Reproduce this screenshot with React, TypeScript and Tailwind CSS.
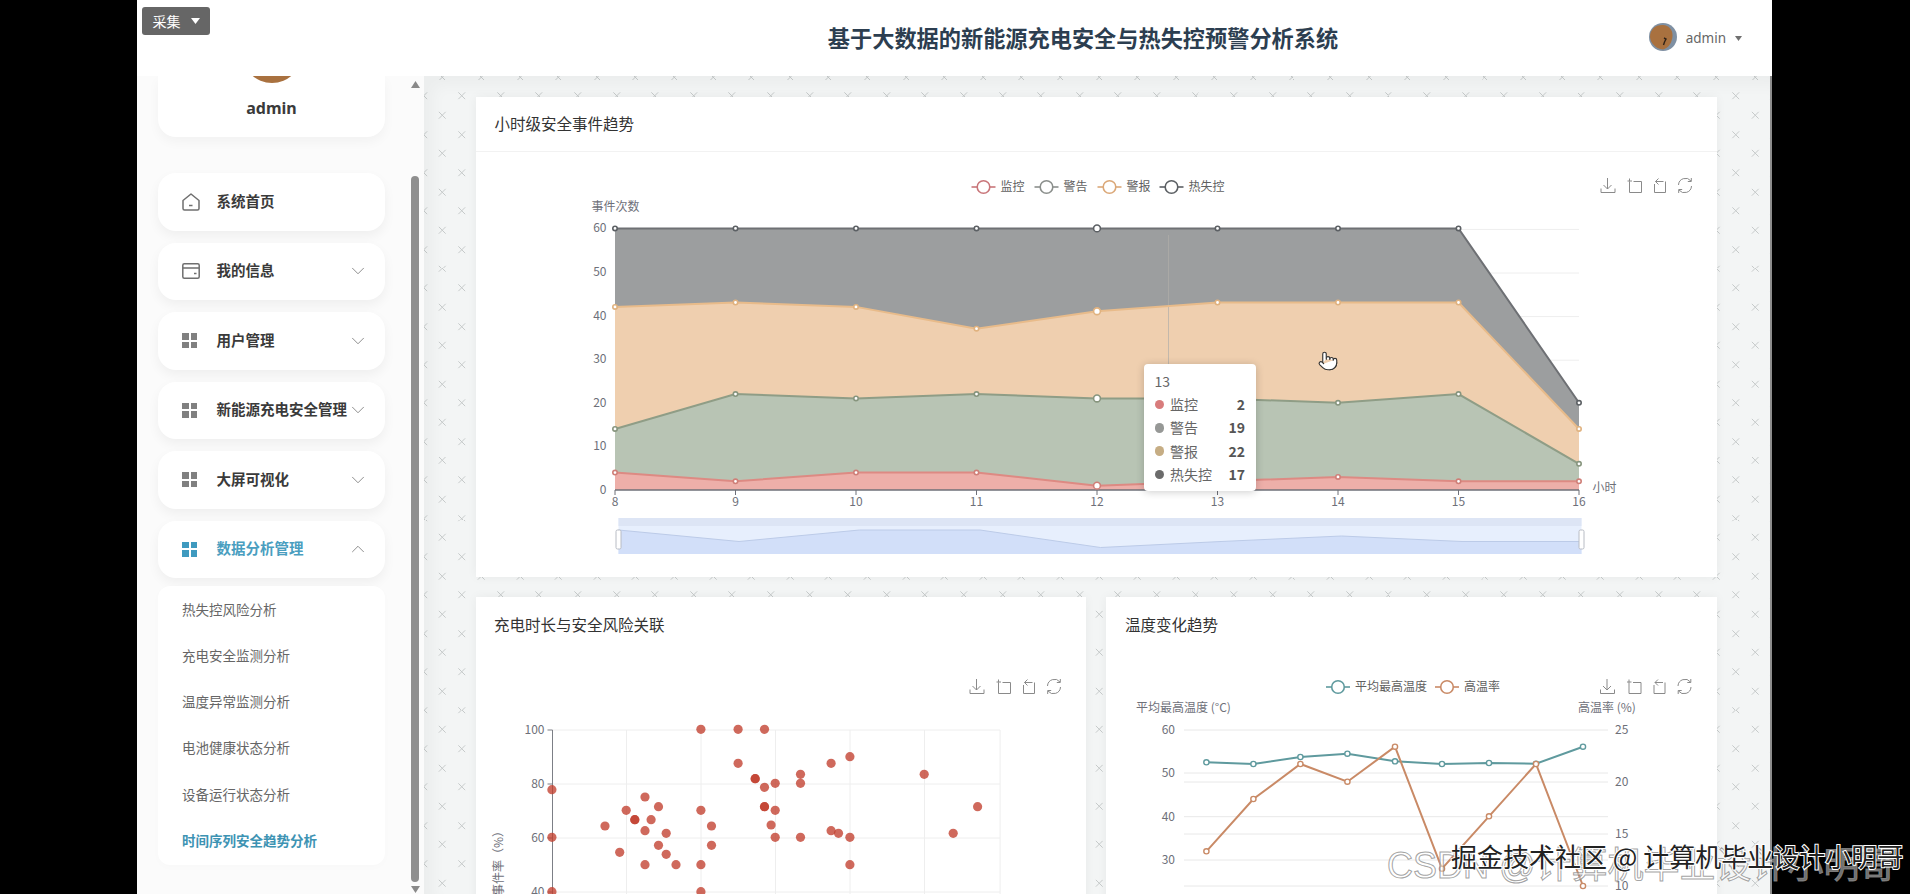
import { ChevronDown, ChevronUp, Pointer } from 'lucide-react';

const NAV = [
  { label: '系统首页', icon: 'home' },
  { label: '我的信息', icon: 'wallet', chevron: true },
  { label: '用户管理', icon: 'grid', chevron: true },
  { label: '新能源充电安全管理', icon: 'grid', chevron: true },
  { label: '大屏可视化', icon: 'grid', chevron: true },
];

const SUB_ITEMS = ['热失控风险分析', '充电安全监测分析', '温度异常监测分析', '电池健康状态分析', '设备运行状态分析'];

const TOOLTIP_ROWS = [
  { name: '监控', value: 2, dot: 'bg-[#d87c7c]' },
  { name: '警告', value: 19, dot: 'bg-[#969896]' },
  { name: '警报', value: 22, dot: 'bg-[#c6ad84]' },
  { name: '热失控', value: 17, dot: 'bg-[#6b6b6b]' },
];

// stacked totals per hour, bottom to top
const STACK = {
  red: [4, 2, 4, 4, 1, 2, 3, 2, 2],
  green: [14, 22, 21, 22, 21, 21, 20, 22, 6],
  orange: [42, 43, 42, 37, 41, 43, 43, 43, 14],
  gray: [60, 60, 60, 60, 60, 60, 60, 60, 20],
};

const hx = (i: number) => 614.5 + i * 120.5;
const vy = (v: number) => 490 - v * 4.36;

const linePts = (vals: number[]) => vals.map((v, i) => `${hx(i)},${vy(v)}`).join(' ');
const areaPts = (top: number[], bottom?: number[]) => {
  const low = bottom ?? top.map(() => 0);
  const back = low.map((v, i) => `${hx(i)},${vy(v)}`).reverse().join(' ');
  return `${linePts(top)} ${back}`;
};

// scatter points measured off the plot
const SCATTER: [number, number][] = [
  [700.4, 729.3], [737.6, 729.3], [764, 729.3], [737.6, 763.3], [849.4, 756.7], [830.6, 763.3],
  [754.7, 778.7], [754.7, 778.7], [800, 774.3], [923.7, 774.3], [764, 787.3], [774.7, 783.3],
  [800, 783.3], [551.4, 789.7], [644.5, 797], [658, 806.7], [625.7, 810.3], [700.4, 810.3],
  [764, 806.7], [764, 806.7], [774.7, 810.3], [977.1, 806.7], [634.3, 819.7], [634.3, 819.7],
  [650.6, 819.7], [604.5, 826], [711, 826], [770.6, 825], [644.5, 830.7], [665.7, 833.3],
  [830.6, 830.7], [838, 833.3], [952.7, 833.3], [551.4, 837.3], [774.7, 837.3], [800, 837.3],
  [849.4, 837.3], [658, 845.3], [711, 845.3], [619.2, 852.3], [665.7, 854.3], [644.5, 864.7],
  [675.5, 864.7], [700.4, 864.7], [849.4, 864.7], [551.4, 891.7], [700.4, 891.7],
];

const TEMP_X = [1206.4, 1253.4, 1300.4, 1347.4, 1395, 1442, 1489, 1536, 1583];
const TEMP_HIGH = [762.3, 764, 757, 753.7, 761.3, 764, 763, 763.7, 746.7];
const TEMP_RATE = [851.3, 799, 764, 781.7, 746.7, 868.7, 816.3, 764, 886];

const pts = (xs: number[], ys: number[]) => xs.map((x, i) => `${x},${ys[i]}`).join(' ');

function GridIcon({ active }: { active?: boolean }) {
  const cell = active ? 'bg-[#3f9abf]' : 'bg-[#808080]';
  return (
    <div className="grid w-[15px] h-[15px] grid-cols-2 gap-[2px] shrink-0">
      <span className={cell} />
      <span className={cell} />
      <span className={cell} />
      <span className={cell} />
    </div>
  );
}

function HomeIcon() {
  return (
    <svg width="18" height="18" viewBox="0 0 18 18" fill="none" stroke="#6f6f6f" strokeWidth="1.5" className="shrink-0">
      <path d="M1 7.5 9 1l8 6.5V15.5a1.5 1.5 0 0 1-1.5 1.5h-13A1.5 1.5 0 0 1 1 15.5z" strokeLinejoin="round" />
      <path d="M7 12.5h3.5" />
    </svg>
  );
}

function WalletIcon() {
  return (
    <svg width="18" height="16" viewBox="0 0 18 16" fill="none" stroke="#6f6f6f" strokeWidth="1.5" className="shrink-0">
      <rect x="0.8" y="0.8" width="16.4" height="14.4" rx="1.5" />
      <path d="M1 5h16M12 10.5h2.5" />
    </svg>
  );
}

function NavCard({ label, icon, chevron }: { label: string; icon: string; chevron?: boolean }) {
  return (
    <div className="flex h-[57.5px] items-center rounded-[18px] bg-white pl-[24px] pr-[16px] shadow-[0_5px_12px_rgba(0,0,0,0.05)]">
      <div className="flex w-[34.5px] shrink-0 items-center">
        {icon === 'home' && <HomeIcon />}
        {icon === 'wallet' && <WalletIcon />}
        {icon === 'grid' && <GridIcon />}
      </div>
      <span className="flex-1 whitespace-nowrap pb-[2px] text-[14.5px] font-bold text-[#3a3a3a]">{label}</span>
      {chevron && <ChevronDown size={22} strokeWidth={0.8} className="shrink-0 text-[#666]" />}
    </div>
  );
}

function Sidebar() {
  return (
    <aside className="flex w-[287px] shrink-0 overflow-hidden bg-[#fbfbfb]">
      <div className="ml-[21px] flex w-[227px] shrink-0 flex-col">
        <div className="flex h-[61px] shrink-0 flex-col items-center overflow-hidden rounded-b-[18px] bg-white shadow-[0_5px_12px_rgba(0,0,0,0.04)]">
          <div className="mt-[-53px] h-[60px] w-[60px] shrink-0 rounded-full bg-[#a9713f]" />
          <span className="mt-[13px] text-[16px] font-bold leading-[24px] text-[#3a3a3a] [font-family:'Noto_Sans',sans-serif]">admin</span>
        </div>
        <div className="mt-[36px] flex flex-col gap-[12px]">
          {NAV.map((item) => (
            <NavCard key={item.label} {...item} />
          ))}
          <div className="flex h-[57.5px] items-center rounded-[18px] bg-white pl-[24px] pr-[16px] shadow-[0_5px_12px_rgba(0,0,0,0.05)]">
            <div className="w-[34.5px] shrink-0">
              <GridIcon active />
            </div>
            <span className="flex-1 pb-[2px] text-[14.5px] font-bold text-[#4a9ec0]">数据分析管理</span>
            <ChevronUp size={22} strokeWidth={0.8} className="text-[#666]" />
          </div>
        </div>
        <div className="mt-[8px] flex flex-col rounded-[12px] bg-white pt-px shadow-[0_2px_8px_rgba(0,0,0,0.015)]">
          {SUB_ITEMS.map((item) => (
            <div key={item} className="flex h-[46.3px] items-center pb-[3px] pl-[24px] text-[13.5px] text-[#666]">
              {item}
            </div>
          ))}
          <div className="flex h-[46.3px] items-center pb-[3px] pl-[24px] text-[13.5px] font-bold text-[#3d93b3]">
            时间序列安全趋势分析
          </div>
        </div>
      </div>
      <div className="ml-[26px] flex w-[8px] shrink-0 flex-col items-center">
        <svg width="9" height="7" viewBox="0 0 9 7" className="mt-[5px] shrink-0">
          <path d="M4.5 0 9 7H0z" fill="#8a8a8a" />
        </svg>
        <div className="mt-[88px] h-[706px] w-[8px] shrink-0 rounded-full bg-[#8f8f8f]" />
        <svg width="9" height="7" viewBox="0 0 9 7" className="mt-[4px] shrink-0">
          <path d="M0 0h9L4.5 7z" fill="#8a8a8a" />
        </svg>
      </div>
    </aside>
  );
}

function Toolbox({ x, y }: { x: number; y: number }) {
  return (
    <g transform={`translate(${x} ${y})`} fill="none" stroke="#8a8a8a" strokeWidth="1">
      <path d="M7 0v11M3 7l4 4 4-4M0.5 10.5v4h14v-4" />
      <path d="M27 3h4.5M29 0.5v3M29 3.5v11h12v-11h-8" />
      <path d="M63 3.5h-8M58 0.5l-3 3 3 3M54 6v8.500h11v-11" />
      <path d="M78 7a7 7 0 0 1 12.500-4M91 8a7 7 0 0 1-12.500 4M90.800 0v3.500h-3.500M78.200 15v-3.500h3.500" />
    </g>
  );
}

function LegendItem({ x, y, color, label }: { x: number; y: number; color: string; label: string }) {
  return (
    <g>
      <line x1={x} x2={x + 24} y1={y} y2={y} stroke={color} strokeWidth="1.6" />
      <circle cx={x + 12} cy={y} r="6.3" fill="#fff" stroke={color} strokeWidth="1.6" />
      <text x={x + 29} y={y + 4} fontSize="12" fill="#5f5f5f">
        {label}
      </text>
    </g>
  );
}

function Series({ vals, line, dot }: { vals: number[]; line: string; dot: string }) {
  return (
    <g>
      <polyline points={linePts(vals)} fill="none" stroke={line} strokeWidth="2" />
      {vals.map((v, i) => (
        <circle key={i} cx={hx(i)} cy={vy(v)} r={i === 4 ? 3.4 : 2.2} fill="#fff" stroke={dot} strokeWidth="1.6" />
      ))}
    </g>
  );
}

function HourlyChart() {
  return (
    <svg viewBox="475.5 152 1241.5 425" width="1241.5" height="425" className="block">
      <text x="591" y="211" fontSize="12" fill="#6e7079">事件次数</text>
      <LegendItem x={971} y={187} color="#c9767a" label="监控" />
      <LegendItem x={1034} y={187} color="#8b8f8c" label="警告" />
      <LegendItem x={1097} y={187} color="#dba878" label="警报" />
      <LegendItem x={1159} y={187} color="#5c6064" label="热失控" />
      <Toolbox x={1600} y={178} />

      {[60, 50, 40, 30, 20, 10].map((v) => (
        <line key={v} x1="614.5" x2="1578.5" y1={vy(v) + 1} y2={vy(v) + 1} stroke="#eeeeee" />
      ))}
      {[60, 50, 40, 30, 20, 10, 0].map((v) => (
        <text key={v} x="606" y={vy(v) + 4} fontSize="12" textAnchor="end" fill="#6e7079">{v}</text>
      ))}

      <polygon points={areaPts(STACK.gray, STACK.orange)} fill="#9c9e9f" />
      <polygon points={areaPts(STACK.orange, STACK.green)} fill="#efcfaf" />
      <polygon points={areaPts(STACK.green, STACK.red)} fill="#b8c4b4" />
      <polygon points={areaPts(STACK.red)} fill="#edafa9" />

      <line x1="1168" x2="1168" y1="235" y2="364" stroke="#b0aeaa" strokeOpacity="0.7" />
      <line x1="614.5" x2="1578.5" y1="490" y2="490" stroke="#6e7079" strokeWidth="1.5" />
      {[0, 1, 2, 3, 4, 5, 6, 7, 8].map((i) => (
        <g key={i}>
          <line x1={hx(i)} x2={hx(i)} y1="490" y2="495" stroke="#6e7079" />
          <text x={hx(i)} y="506" fontSize="12" textAnchor="middle" fill="#6e7079">{8 + i}</text>
        </g>
      ))}
      <text x="1592" y="492" fontSize="12" fill="#6e7079">小时</text>

      <Series vals={STACK.red} line="#dd8a83" dot="#cf7f78" />
      <Series vals={STACK.green} line="#8f9d86" dot="#87957e" />
      <Series vals={STACK.orange} line="#e8bb8a" dot="#e0b27f" />
      <Series vals={STACK.gray} line="#6e7074" dot="#5c6064" />

      <rect x="618" y="518" width="963" height="36" fill="#e7effd" />
      <rect x="618" y="518" width="963" height="8" fill="#dde5f5" />
      <polygon
        points="618,530 738.500,541.500 859,530 979.500,530 1100,547.500 1220.500,541.500 1341,536 1461.500,541.500 1581,541.500 1581,554 618,554"
        fill="#d2dff9"
      />
      <polyline
        points="618,530 738.500,541.500 859,530 979.500,530 1100,547.500 1220.500,541.500 1341,536 1461.500,541.500 1581,541.500"
        fill="none"
        stroke="#bccbe8"
      />
      <rect x="615.500" y="530" width="5" height="19" rx="1.5" fill="#fff" stroke="#b8bcc4" />
      <rect x="1578.500" y="530" width="5" height="19" rx="1.5" fill="#fff" stroke="#b8bcc4" />

      <Pointer x={1317} y={350} width={21} height={22} fill="#fff" stroke="#333" strokeWidth={1.3} />
    </svg>
  );
}

function ScatterChart() {
  return (
    <svg viewBox="475.5 652 610.5 345" width="610.5" height="345" className="block">
      <Toolbox x={969} y={679} />
      {[730, 784, 838, 892].map((y) => (
        <line key={y} x1="552" x2="999.6" y1={y} y2={y} stroke="#eeeeee" />
      ))}
      {[626, 700.5, 775, 849.5, 924, 999.6].map((x) => (
        <line key={x} x1={x} x2={x} y1="730" y2="900" stroke="#eeeeee" />
      ))}
      <line x1="552" x2="552" y1="730" y2="900" stroke="#7c7f86" />
      {[
        { y: 730, t: 100 },
        { y: 784, t: 80 },
        { y: 838, t: 60 },
        { y: 892, t: 40 },
      ].map((r) => (
        <g key={r.t}>
          <line x1="547" x2="552" y1={r.y} y2={r.y} stroke="#7c7f86" />
          <text x="544" y={r.y + 4} fontSize="12" textAnchor="end" fill="#6e7079">{r.t}</text>
        </g>
      ))}
      <text x="0" y="0" fontSize="12" textAnchor="end" fill="#6e7079" transform="translate(502 825) rotate(-90)">
        安全事件率（%）
      </text>
      {SCATTER.map(([x, y], i) => (
        <circle key={i} cx={x} cy={y} r="4.6" fill="#c23f2e" fillOpacity="0.78" />
      ))}
    </svg>
  );
}

function TempChart() {
  return (
    <svg viewBox="1106 652 611 345" width="611" height="345" className="block">
      <LegendItem x={1326} y={687} color="#5f9a9e" label="平均最高温度" />
      <LegendItem x={1435} y={687} color="#c98a66" label="高温率" />
      <Toolbox x={1600} y={679} />
      <text x="1136" y="712" fontSize="12" fill="#6e7079">平均最高温度 (°C)</text>
      <text x="1578" y="712" fontSize="12" fill="#6e7079">高温率 (%)</text>
      {[730, 773, 782, 816.7, 834, 860, 886].map((y) => (
        <line key={y} x1="1184" x2="1608" y1={y} y2={y} stroke="#e8e8e8" />
      ))}
      {[
        { y: 730, t: 60 },
        { y: 773, t: 50 },
        { y: 816.7, t: 40 },
        { y: 860, t: 30 },
      ].map((r) => (
        <text key={r.t} x="1175" y={r.y + 4} fontSize="12" textAnchor="end" fill="#6e7079">{r.t}</text>
      ))}
      {[
        { y: 730, t: 25 },
        { y: 782, t: 20 },
        { y: 834, t: 15 },
        { y: 886, t: 10 },
      ].map((r) => (
        <text key={r.t} x="1615" y={r.y + 4} fontSize="12" fill="#6e7079">{r.t}</text>
      ))}
      <polyline points={pts(TEMP_X, TEMP_HIGH)} fill="none" stroke="#5f9a9e" strokeWidth="2" />
      <polyline points={pts(TEMP_X, TEMP_RATE)} fill="none" stroke="#c98a66" strokeWidth="2" />
      {TEMP_X.map((x, i) => (
        <g key={x}>
          <circle cx={x} cy={TEMP_HIGH[i]} r="2.6" fill="#fff" stroke="#5f9a9e" strokeWidth="1.4" />
          <circle cx={x} cy={TEMP_RATE[i]} r="2.6" fill="#fff" stroke="#c98a66" strokeWidth="1.4" />
        </g>
      ))}
    </svg>
  );
}

function ChartTooltip() {
  return (
    <div className="absolute left-[668px] top-[267px] h-[127px] w-[112.5px] rounded-[4px] bg-white pl-[11px] pr-[11px] pt-[6px] text-[14px] shadow-[0_1px_8px_rgba(0,0,0,0.2)]">
      <div className="h-[23px] leading-[23px] text-[#666]">13</div>
      {TOOLTIP_ROWS.map((row) => (
        <div key={row.name} className="flex h-[23.300px] items-center">
          <span className={`mr-[6px] h-[9.500px] w-[9.500px] rounded-full ${row.dot}`} />
          <span className="flex-1 text-[#666]">{row.name}</span>
          <span className="font-bold text-[#555]">{row.value}</span>
        </div>
      ))}
    </div>
  );
}

function Header() {
  return (
    <header className="relative flex h-[76px] shrink-0 items-center justify-center bg-white pl-[257px]">
      <h1 className="text-[22.2px] font-bold text-[#2c3e50]">基于大数据的新能源充电安全与热失控预警分析系统</h1>
      <div className="absolute right-[30px] top-[23px] flex items-center">
        <svg width="28" height="28" viewBox="0 0 28 28" className="mr-[9px] shrink-0">
          <circle cx="14" cy="14" r="14" fill="#7f90a3" />
          <path d="M1 14C1 6 7 1.500 14 2c6 .5 10 5 9.500 11-.5 7-4 12-9.500 13.500C7 26 1.500 20 1 14z" fill="#a9713f" />
          <path d="M15 15l2 1-1.500 3-1 3" fill="none" stroke="#2f2218" strokeWidth="1.4" />
        </svg>
        <span className="pt-[2px] text-[13.500px] text-[#666] [font-family:'Noto_Sans',sans-serif]">admin</span>
        <svg width="7" height="5" viewBox="0 0 7 5" className="ml-[9px] mt-[2px]">
          <path d="M0 0h7L3.500 5z" fill="#707070" />
        </svg>
      </div>
    </header>
  );
}

export default function App() {
  return (
    <div className="relative flex h-[894px] w-[1910px] overflow-hidden bg-black [font-family:'Noto_Sans_CJK_SC',sans-serif]">
      <div className="ml-[137px] flex h-full w-[1635px] shrink-0 flex-col bg-white">
        <Header />
        <div className="flex min-h-0 flex-1">
          <Sidebar />
          <main className="flex-1 overflow-hidden border-r-2 border-[#8c8c8c] bg-[#f3f5f5] bg-[url('data:image/svg+xml,%3Csvg%20xmlns=%27http://www.w3.org/2000/svg%27%20width=%2740%27%20height=%2740%27%3E%3Cpath%20d=%27M6.500%206.500l7%207m0-7l-7%207M26.500%2026.500l7%207m0-7l-7%207%27%20stroke=%27%23c4c8c8%27%20fill=%27none%27/%3E%3C/svg%3E')] bg-[length:38.6px_38.4px] bg-[position:28.35px_10.4px] pl-[51.5px] pt-[21px] shadow-[inset_10px_10px_14px_rgba(0,0,0,0.03)]">
            <section className="relative w-[1241.5px] bg-white shadow-[0_0_10px_rgba(0,0,0,0.05)]">
              <div className="flex h-[55px] items-center border-b border-[#f2f2f2] pb-px pl-[19px] text-[15.500px] text-[#333]">
                小时级安全事件趋势
              </div>
              <HourlyChart />
              <ChartTooltip />
            </section>
            <div className="mt-[20px] flex gap-[20px]">
              <section className="w-[610.5px] shrink-0 bg-white shadow-[0_0_10px_rgba(0,0,0,0.05)]">
                <div className="flex h-[55px] items-center pl-[18.5px] text-[15.500px] text-[#333]">充电时长与安全风险关联</div>
                <ScatterChart />
              </section>
              <section className="w-[611px] shrink-0 bg-white shadow-[0_0_10px_rgba(0,0,0,0.05)]">
                <div className="flex h-[55px] items-center pl-[19px] text-[15.500px] text-[#333]">温度变化趋势</div>
                <TempChart />
              </section>
            </div>
          </main>
        </div>
      </div>

      <button className="absolute left-[142px] top-[7px] flex h-[28px] w-[68px] items-center justify-center gap-[10px] rounded-[3px] bg-[#666] text-[14px] text-white">
        采集
        <svg width="9" height="6" viewBox="0 0 9 6">
          <path d="M0 0h9L4.500 6z" fill="#fff" />
        </svg>
      </button>

      <div className="absolute left-[1387px] top-[843px] whitespace-nowrap text-[36px] leading-[46px] text-[rgba(255,255,255,0.45)] [-webkit-text-stroke:1px_rgba(140,140,140,0.8)] [font-family:'Liberation_Sans','Noto_Sans_CJK_SC',sans-serif]">
        CSDN @计算机毕业设计小明哥
      </div>
      <div className="absolute left-[1451px] top-[840px] whitespace-nowrap text-[26px] leading-[32px] text-[#222] [-webkit-text-stroke:2px_#fff] [paint-order:stroke_fill]">
        掘金技术社区 @ 计算机毕业设计小明哥
      </div>
    </div>
  );
}
